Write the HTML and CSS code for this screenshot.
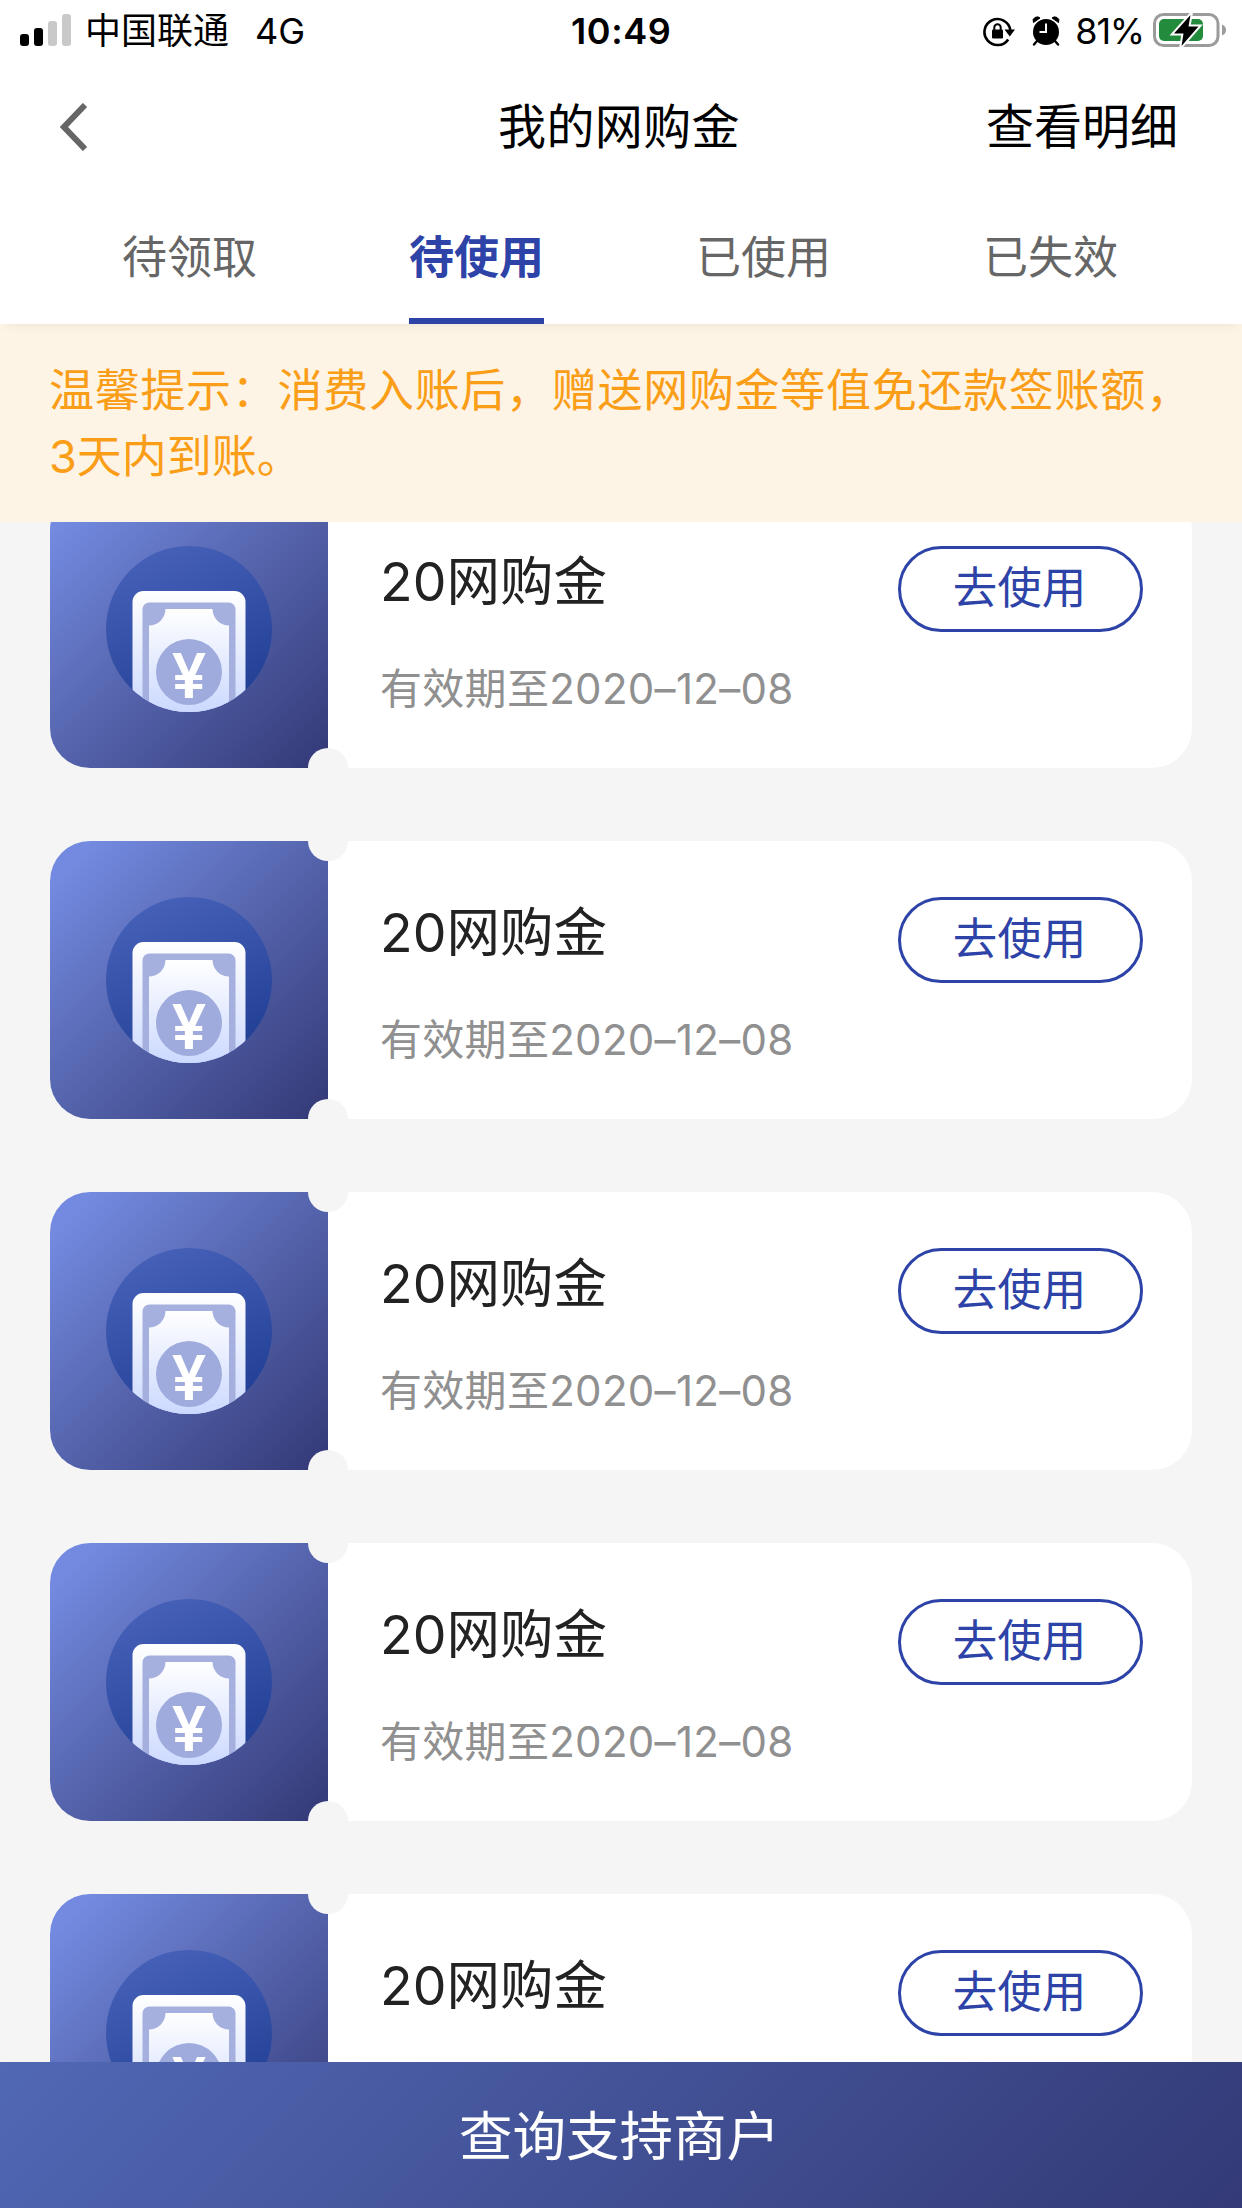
FILE: index.html
```html
<!DOCTYPE html>
<html lang="zh-CN">
<head>
<meta charset="utf-8">
<title>我的网购金</title>
<link rel="stylesheet" href="styles.css">
</head>
<body>
<svg class="sprite" aria-hidden="true">
  <defs>
    <linearGradient id="disc" x1="0.2" y1="0" x2="0.6" y2="1">
      <stop offset="0" stop-color="#4862ba"/><stop offset="1" stop-color="#213f95"/>
    </linearGradient>
    <linearGradient id="paper" x1="0" y1="0" x2="0" y2="1">
      <stop offset="0" stop-color="#ffffff"/><stop offset="1" stop-color="#ccd9ff"/>
    </linearGradient>
    <clipPath id="round"><circle cx="83" cy="83" r="83"/></clipPath>
  </defs>
  <symbol id="bill" viewBox="0 0 166 166">
    <circle cx="83" cy="83" r="83" fill="url(#disc)"/>
    <g clip-path="url(#round)">
      <path d="M26.500 166V56a11 11 0 0 1 11-11h91a11 11 0 0 1 11 11v110z" fill="url(#paper)"/>
      <path d="M36.500 166V63.500a7 7 0 0 1 7-7h79a7 7 0 0 1 7 7V166z" fill="#a5b0de"/>
      <path d="M43 166V79.500A16.500 16.500 0 0 0 59.500 63h47A16.500 16.500 0 0 0 123 79.500V166z" fill="url(#paper)"/>
      <circle cx="83" cy="126" r="33" fill="#9fabdc"/>
      <text class="yen" x="83" y="152" text-anchor="middle">¥</text>
    </g>
  </symbol>
</svg>
<div class="app">
  <div class="status">
    <div class="status-left">
      <svg class="signal" width="51" height="32" viewBox="0 0 51 32">
        <rect x="0" y="20" width="9" height="12" rx="3"/>
        <rect x="14" y="14" width="9" height="18" rx="3"/>
        <rect x="28" y="7" width="9" height="25" rx="3" fill="#c9c9c9"/>
        <rect x="42" y="0" width="9" height="32" rx="3" fill="#c9c9c9"/>
      </svg>
      <span class="carrier">中国联通</span>
      <span class="network">4G</span>
    </div>
    <div class="clock">10:49</div>
    <div class="status-right">
      <svg class="lock" width="32" height="30" viewBox="0 0 32 30">
        <path d="M25.200 22.400A13 13 0 1 1 27.300 13" fill="none" stroke="#000" stroke-width="2.600"/>
        <path d="M21.500 12.600H32l-5.200 7z"/>
        <rect x="9" y="12.500" width="11" height="9" rx="1.300"/>
        <path d="M11.300 13v-2.500a3.200 3.200 0 0 1 6.400 0V13" fill="none" stroke="#000" stroke-width="2"/>
      </svg>
      <svg class="alarm" width="28" height="30" viewBox="0 0 28 30">
        <circle cx="14" cy="16" r="13"/>
        <path d="M1.500 6.500Q0 3 3 1.500T8 2zM26.500 6.500Q28 3 25 1.500T20 2z" stroke="#000" stroke-linejoin="round"/>
        <path d="M5 25l-3 3.500M23 25l3 3.500" stroke="#000" stroke-width="2.400" stroke-linecap="round"/>
        <path d="M14 7.500V16H7.500" fill="none" stroke="#fff" stroke-width="2"/>
      </svg>
      <span class="percent">81%</span>
      <svg class="battery" width="74" height="36" viewBox="0 0 74 36">
        <rect x="1.500" y="1.500" width="63.500" height="31" rx="9" fill="#fff" stroke="#9b9b9b" stroke-width="3"/>
        <path d="M69 11.500q4 1.500 4 5.500t-4 5.500z" fill="#9b9b9b"/>
        <rect x="6" y="6" width="44" height="22" rx="5" fill="#238c3c"/>
        <path d="M37.500 2L21 20.500h9.500L28.500 33 45.500 13.500H35.500z" fill="#000" stroke="#fff" stroke-width="4" paint-order="stroke"/>
      </svg>
    </div>
  </div>
  <div class="navbar">
    <svg class="back" width="28" height="48" viewBox="0 0 28 48"><path d="M25 2L4 24l21 22" fill="none" stroke="#666" stroke-width="6"/></svg>
    <div class="title">我的网购金</div>
    <div class="detail">查看明细</div>
  </div>
  <div class="tabs">
    <div class="tab"><span class="tab-label">待领取</span></div>
    <div class="tab active"><span class="tab-label">待使用</span></div>
    <div class="tab"><span class="tab-label">已使用</span></div>
    <div class="tab"><span class="tab-label">已失效</span></div>
  </div>
  <div class="notice">温馨提示：消费入账后，赠送网购金等值免还款签账额，3天内到账。</div>
  <div class="list">
    <div class="card">
      <div class="cover"><svg class="bill"><use href="#bill"/></svg></div>
      <div class="info"><div class="name">20网购金</div><div class="date">有效期至2020–12–08</div></div>
      <div class="use">去使用</div>
    </div>
    <div class="card">
      <div class="cover"><svg class="bill"><use href="#bill"/></svg></div>
      <div class="info"><div class="name">20网购金</div><div class="date">有效期至2020–12–08</div></div>
      <div class="use">去使用</div>
    </div>
    <div class="card">
      <div class="cover"><svg class="bill"><use href="#bill"/></svg></div>
      <div class="info"><div class="name">20网购金</div><div class="date">有效期至2020–12–08</div></div>
      <div class="use">去使用</div>
    </div>
    <div class="card">
      <div class="cover"><svg class="bill"><use href="#bill"/></svg></div>
      <div class="info"><div class="name">20网购金</div><div class="date">有效期至2020–12–08</div></div>
      <div class="use">去使用</div>
    </div>
    <div class="card">
      <div class="cover"><svg class="bill"><use href="#bill"/></svg></div>
      <div class="info"><div class="name">20网购金</div></div>
      <div class="use">去使用</div>
    </div>
  </div>
  <div class="footer">查询支持商户</div>
</div>
</body>
</html>
```
FILE: styles.css
```css
* { box-sizing: border-box; }
body {
  margin: 0;
  background: #f5f5f5;
  font-family: Inter, "Noto Sans CJK SC", sans-serif;
  font-weight: 380;
  color: #000;
}
.sprite { position: absolute; width: 0; height: 0; }
.app {
  width: 1242px;
  height: 2208px;
  display: flex;
  flex-direction: column;
  overflow: hidden;
}
.status {
  flex: none;
  height: 60px;
  padding: 0 15px 0 20px;
  display: grid;
  grid-template-columns: 551px auto 1fr;
  background: #fff;
  font-size: 36px;
  line-height: 63px;
}
.status svg { flex: none; }
.status-left { display: flex; }
.signal { margin-top: 14px; }
.carrier { margin-left: 14px; }
.network { margin-left: 26px; font-weight: 400; }
.clock { font-weight: 600; letter-spacing: 0.6px; }
.status-right { display: flex; justify-content: flex-end; }
.lock { margin-top: 17px; }
.alarm { margin: 16px 0 0 17px; }
.percent { margin-left: 15px; font-weight: 400; letter-spacing: -1.2px; }
.battery { margin: 13px 0 0 9px; }
.navbar {
  flex: none;
  height: 132px;
  padding: 0 64px 0 60px;
  display: grid;
  grid-template-columns: 1fr auto 1fr;
  align-items: center;
  background: #fff;
  font-size: 48px;
  line-height: 134px;
}
.title { letter-spacing: 0.4px; }
.detail { text-align: right; }
.tabs {
  flex: none;
  position: relative;
  z-index: 1;
  height: 132px;
  padding: 0 48px 0 46px;
  display: grid;
  grid-template-columns: repeat(4, 1fr);
  justify-items: center;
  background: #fff;
  box-shadow: 0 6px 12px -6px rgba(0, 0, 0, 0.08);
  font-size: 45px;
  line-height: 132px;
  color: #666;
}
.tab { height: 132px; }
.active {
  border-bottom: 6px solid #2d43a7;
  color: #2d43a7;
  font-weight: 600;
}
.notice {
  flex: none;
  height: 198px;
  padding: 34px 51px 32px 49px;
  background: #fef4e5;
  color: #fa9d17;
  font-size: 45px;
  line-height: 66px;
  text-align: justify;
  text-spacing-trim: space-all;
}
.list {
  flex: 1;
  min-height: 0;
  overflow: hidden;
  padding: 0 50px;
}
.card {
  position: relative;
  height: 278px;
  margin-bottom: 73px;
  display: flex;
  background: #fff;
  border-radius: 40px;
}
.card:first-child { margin-top: -32px; }
.card::before,
.card::after {
  content: "";
  position: absolute;
  left: 258px;
  width: 40px;
  height: 20px;
  background: #f5f5f5;
}
.card::before { top: 0; border-radius: 0 0 20px 20px; }
.card::after { bottom: 0; border-radius: 20px 20px 0 0; }
.cover {
  flex: none;
  width: 278px;
  height: 278px;
  display: flex;
  align-items: center;
  justify-content: center;
  border-radius: 40px 0 0 40px;
  background: linear-gradient(135deg, #738ae0 8%, #5868b2 45%, #353b79 97%);
}
.bill { width: 166px; height: 166px; }
.yen { font: 600 62px Inter, sans-serif; fill: #fff; }
.info { flex: 1; padding: 52px 0 0 52px; }
.name { font-size: 53.5px; line-height: 80px; color: #222; }
.date { margin-top: 37px; font-size: 42px; line-height: 60px; letter-spacing: 0.3px; color: #909090; }
.use {
  flex: none;
  width: 245px;
  height: 86px;
  margin: 56px 49px 0 0;
  padding-right: 2px;
  border: 3px solid #2d43a7;
  border-radius: 43px;
  text-align: center;
  font-size: 44.5px;
  line-height: 78px;
  color: #2d43a7;
}
.footer {
  flex: none;
  height: 146px;
  padding-right: 3px;
  background: linear-gradient(135deg, #5168b5, #333a76);
  color: #fff;
  font-size: 53.5px;
  line-height: 150px;
  text-align: center;
}
```
